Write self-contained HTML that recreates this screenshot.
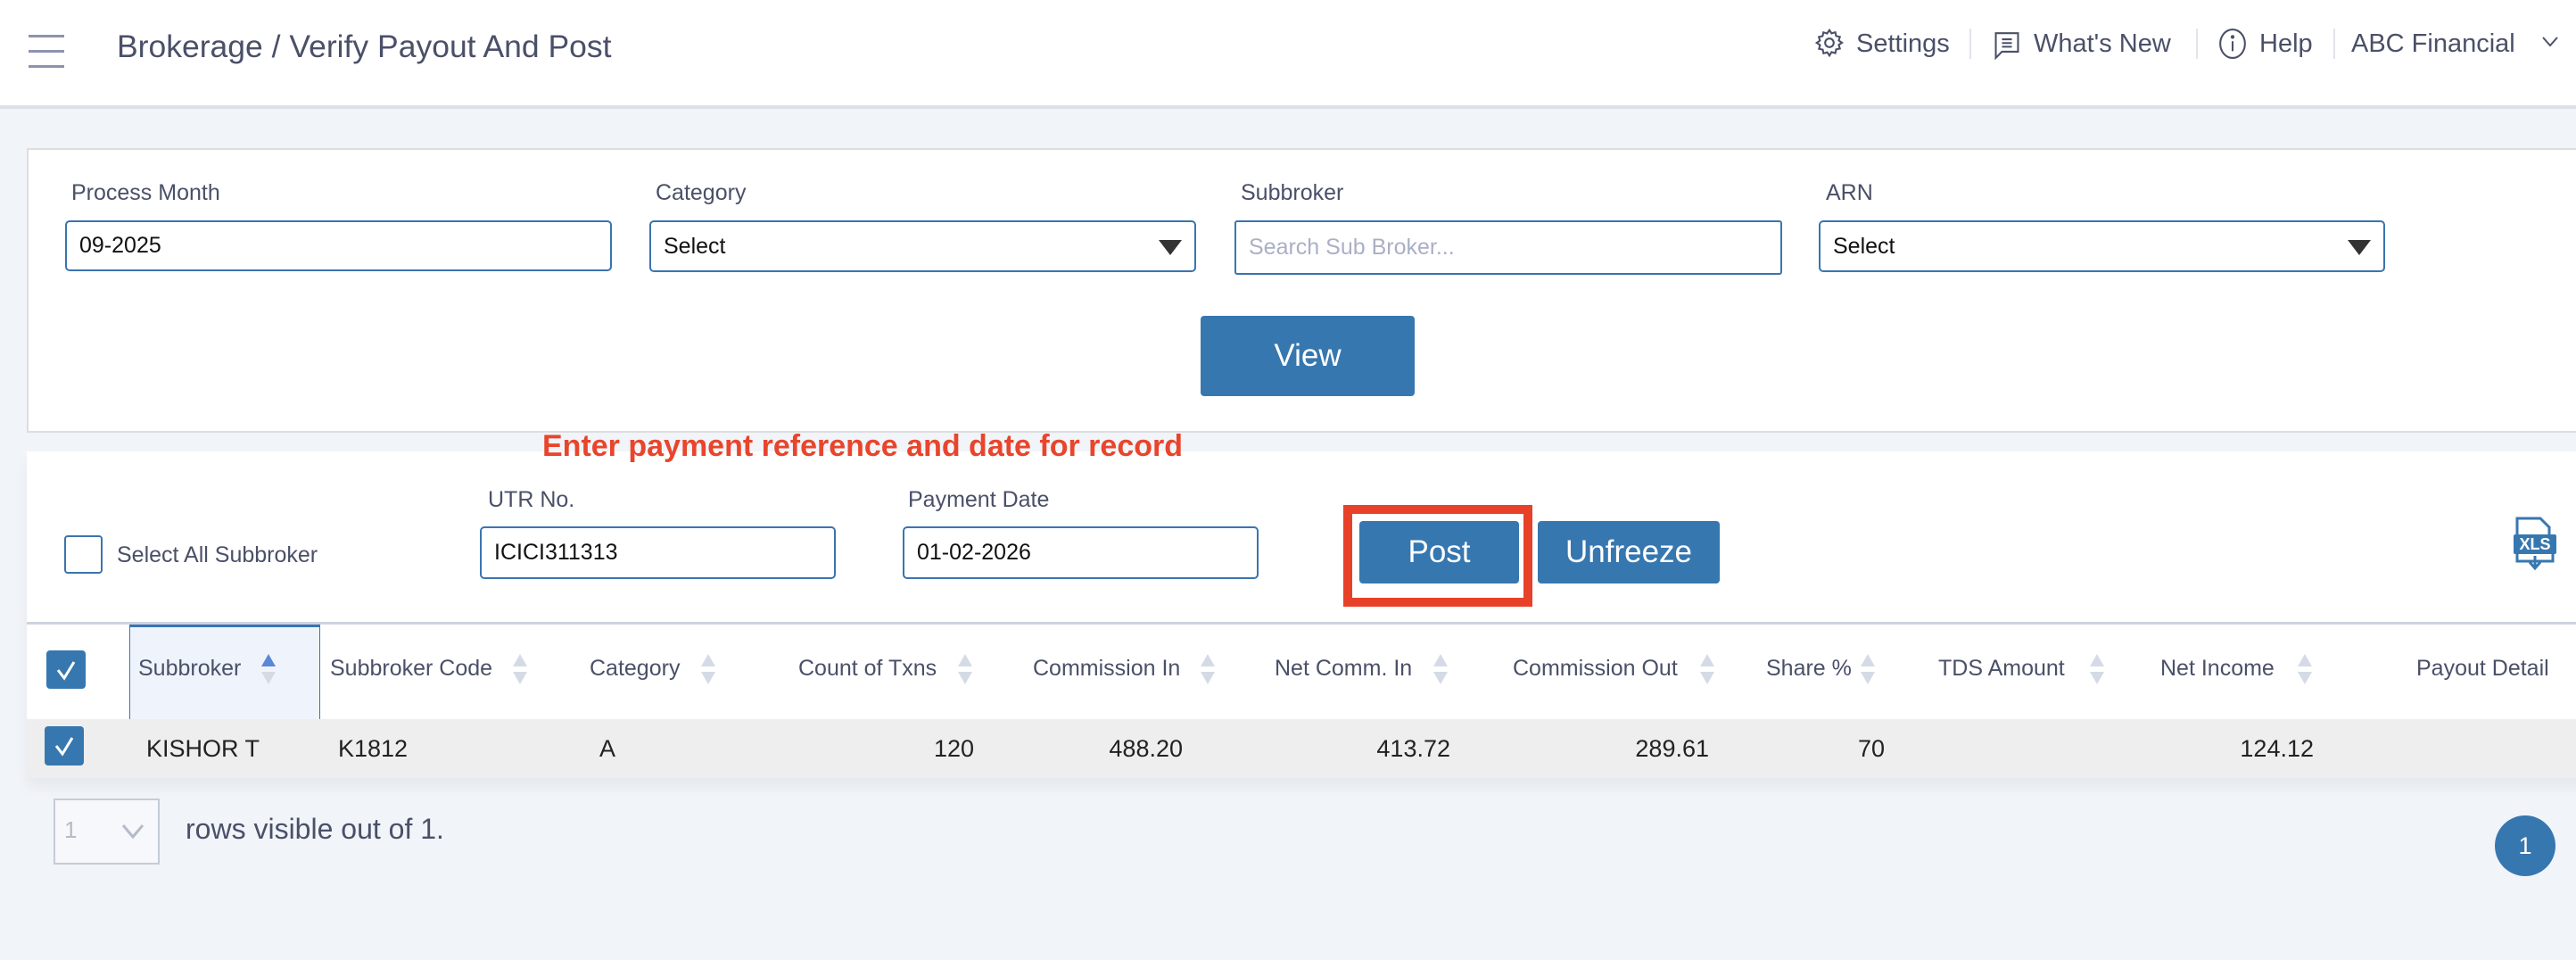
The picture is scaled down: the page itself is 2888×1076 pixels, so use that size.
<!DOCTYPE html>
<html><head><meta charset="utf-8"><style>
*{box-sizing:border-box;margin:0;padding:0}
body{width:2888px;height:1076px;background:#f1f4f8;font-family:"Liberation Sans",sans-serif;position:relative;overflow:hidden;color:#4a5068}
.a{position:absolute;white-space:nowrap}
.hdr{left:0;top:0;width:2888px;height:122px;background:#fff;border-bottom:4px solid #dde0e8}
.ham{left:32px;width:40px;height:3px;background:#8c93ad}
.nav{font-size:29px;color:#4a5068;top:33px}
.sep{top:32px;width:2px;height:34px;background:#e2e4ea}
.lbl{font-size:25px;color:#4a5068}
.inp{border:2px solid #3a74b0;border-radius:5px;background:#fff;font-size:25px;color:#111;padding-left:14px;display:flex;align-items:center}
.tri{position:absolute;right:14px;top:20px;width:0;height:0;border-left:13px solid transparent;border-right:13px solid transparent;border-top:17px solid #333}
.btn{background:#3777b0;color:#fff;border-radius:4px;display:flex;align-items:center;justify-content:center;font-size:35px}
.th{font-size:25px;color:#4a5068;top:735px}
.srt{top:733px;width:20px;height:34px}
.td{font-size:27px;color:#222;top:824px}
.cb{background:#3777b0;border-radius:4px}
</style></head><body>
<div class="a hdr"></div>
<div class="a ham" style="top:39px"></div>
<div class="a ham" style="top:56px"></div>
<div class="a ham" style="top:73px"></div>
<div class="a" style="left:131px;top:32px;font-size:35.5px;color:#4a5068">Brokerage / Verify Payout And Post</div>
<svg class="a" style="left:2033px;top:30px" width="36" height="36" viewBox="0 0 24 24" fill="none" stroke="#4a5068" stroke-width="1.4"><circle cx="12" cy="12" r="3.2"/><path d="M12 2.5l1.6 2.4 2.8-.8.6 2.8 2.8.6-.8 2.8 2.4 1.6-2.4 1.6.8 2.8-2.8.6-.6 2.8-2.8-.8L12 21.5l-1.6-2.4-2.8.8-.6-2.8-2.8-.6.8-2.8L2.5 12l2.4-1.6-.8-2.8 2.8-.6.6-2.8 2.8.8z"/></svg>
<div class="a nav" style="left:2081px">Settings</div>
<div class="a sep" style="left:2208px"></div>
<svg class="a" style="left:2233px;top:33px" width="34" height="36" viewBox="0 0 24 26" fill="none" stroke="#4a5068" stroke-width="1.5"><path d="M3 3h18v15H8l-5 5z"/><path d="M8 8h8M8 11h8M8 14h8"/></svg>
<div class="a nav" style="left:2280px">What's New</div>
<div class="a sep" style="left:2462px"></div>
<svg class="a" style="left:2486px;top:31px" width="34" height="36" viewBox="0 0 24 26" fill="none" stroke="#4a5068" stroke-width="1.5"><ellipse cx="12" cy="13" rx="10" ry="11.5"/><path d="M12 11v8"/><circle cx="12" cy="7.5" r=".8" fill="#4a5068"/></svg>
<div class="a nav" style="left:2533px">Help</div>
<div class="a sep" style="left:2616px"></div>
<div class="a nav" style="left:2636px">ABC Financial</div>
<svg class="a" style="left:2849px;top:40px" width="20" height="14" viewBox="0 0 20 14" fill="none" stroke="#4a5068" stroke-width="2"><path d="M2 2l8 9 8-9"/></svg>

<div class="a" style="left:30px;top:166px;width:2880px;height:319px;background:#fff;border:2px solid #ddd"></div>
<div class="a lbl" style="left:80px;top:202px">Process Month</div>
<div class="a lbl" style="left:735px;top:202px">Category</div>
<div class="a lbl" style="left:1391px;top:202px">Subbroker</div>
<div class="a lbl" style="left:2047px;top:202px">ARN</div>
<div class="a inp" style="left:73px;top:247px;width:613px;height:57px">09-2025</div>
<div class="a inp" style="left:728px;top:247px;width:613px;height:58px">Select<div class="tri"></div></div>
<div class="a inp" style="left:1384px;top:247px;width:614px;height:61px;color:#a9b0c6;border-radius:3px">Search Sub Broker...</div>
<div class="a inp" style="left:2039px;top:247px;width:635px;height:58px">Select<div class="tri"></div></div>
<div class="a btn" style="left:1346px;top:354px;width:240px;height:90px">View</div>

<div class="a" style="left:30px;top:506px;width:2880px;height:366px;background:#fff;box-shadow:0 10px 14px rgba(0,0,0,.05)"></div>
<div class="a" style="left:608px;top:481px;font-size:34px;font-weight:bold;color:#e8452c">Enter payment reference and date for record</div>
<div class="a lbl" style="left:547px;top:546px">UTR No.</div>
<div class="a lbl" style="left:1018px;top:546px">Payment Date</div>
<div class="a" style="left:72px;top:600px;width:43px;height:43px;border:2px solid #3a74b0;border-radius:4px"></div>
<div class="a lbl" style="left:131px;top:608px">Select All Subbroker</div>
<div class="a inp" style="left:538px;top:590px;width:399px;height:59px">ICICI311313</div>
<div class="a inp" style="left:1012px;top:590px;width:399px;height:59px">01-02-2026</div>
<div class="a" style="left:1506px;top:566px;width:212px;height:114px;border:10px solid #e8412a"></div>
<div class="a btn" style="left:1524px;top:584px;width:179px;height:70px">Post</div>
<div class="a btn" style="left:1724px;top:584px;width:204px;height:70px">Unfreeze</div>
<svg class="a" style="left:2816px;top:579px" width="52" height="62" viewBox="0 0 52 62"><path d="M6 2h26l10 10v12H6z" fill="#fff" stroke="#3777b0" stroke-width="3"/><rect x="2" y="20" width="48" height="22" rx="2" fill="#3777b0"/><text x="26" y="37" font-size="18" font-weight="bold" fill="#fff" text-anchor="middle" font-family="Liberation Sans">XLS</text><path d="M6 42v8h40v-8" fill="none" stroke="#3777b0" stroke-width="3"/><path d="M26 44v12M20 51l6 7 6-7" fill="none" stroke="#3777b0" stroke-width="3"/></svg>

<div class="a" style="left:30px;top:697px;width:2860px;height:3px;background:#cdd3df"></div>
<div class="a" style="left:145px;top:700px;width:214px;height:106px;background:#eff4fc;border:1px solid #3a74b0;border-top:3px solid #3a74b0;border-bottom:none"></div>
<div class="a cb" style="left:52px;top:729px;width:44px;height:43px"></div>
<svg class="a" style="left:52px;top:729px" width="44" height="43"><path d="M13 22l7 9 11-18" fill="none" stroke="#fff" stroke-width="3"/></svg>
<div class="a th" style="left:155px">Subbroker</div>
<div class="a th" style="left:370px">Subbroker Code</div>
<div class="a th" style="left:661px">Category</div>
<div class="a th" style="left:895px">Count of Txns</div>
<div class="a th" style="left:1158px">Commission In</div>
<div class="a th" style="left:1429px">Net Comm. In</div>
<div class="a th" style="left:1696px">Commission Out</div>
<div class="a th" style="left:1980px">Share %</div>
<div class="a th" style="left:2173px">TDS Amount</div>
<div class="a th" style="left:2422px">Net Income</div>
<div class="a th" style="left:2709px">Payout Detail</div>
<svg width="0" height="0" style="position:absolute"><defs><g id="s"><path d="M10 0l8 14H2z" fill="#d5dbe5"/><path d="M10 34l8-14H2z" fill="#d5dbe5"/></g></defs></svg>
<svg class="a srt" style="left:291px"><path d="M10 0l8 14H2z" fill="#5a87d8"/><path d="M10 34l8-14H2z" fill="#d5dbe5"/></svg>
<svg class="a srt" style="left:573px"><use href="#s"/></svg>
<svg class="a srt" style="left:784px"><use href="#s"/></svg>
<svg class="a srt" style="left:1072px"><use href="#s"/></svg>
<svg class="a srt" style="left:1344px"><use href="#s"/></svg>
<svg class="a srt" style="left:1605px"><use href="#s"/></svg>
<svg class="a srt" style="left:1904px"><use href="#s"/></svg>
<svg class="a srt" style="left:2084px"><use href="#s"/></svg>
<svg class="a srt" style="left:2341px"><use href="#s"/></svg>
<svg class="a srt" style="left:2574px"><use href="#s"/></svg>

<div class="a" style="left:30px;top:806px;width:2860px;height:66px;background:#eeeeee"></div>
<div class="a cb" style="left:50px;top:814px;width:44px;height:44px"></div>
<svg class="a" style="left:50px;top:814px" width="44" height="44"><path d="M13 22l7 9 11-18" fill="none" stroke="#fff" stroke-width="3"/></svg>
<div class="a td" style="left:164px">KISHOR T</div>
<div class="a td" style="left:379px">K1812</div>
<div class="a td" style="left:672px">A</div>
<div class="a td" style="right:1796px">120</div>
<div class="a td" style="right:1562px">488.20</div>
<div class="a td" style="right:1262px">413.72</div>
<div class="a td" style="right:972px">289.61</div>
<div class="a td" style="right:775px">70</div>
<div class="a td" style="right:294px">124.12</div>

<div class="a" style="left:60px;top:895px;width:119px;height:74px;border:2px solid #c5cbd8;background:#f7f8fb"></div>
<div class="a" style="left:72px;top:915px;font-size:26px;color:#b5bbc8">1</div>
<svg class="a" style="left:136px;top:923px" width="26" height="18"><path d="M2 2l11 13 11-13" fill="none" stroke="#b5bbc8" stroke-width="3"/></svg>
<div class="a" style="left:208px;top:911px;font-size:32px;color:#4a5068">rows visible out of 1.</div>
<div class="a" style="left:2797px;top:914px;width:68px;height:68px;border-radius:50%;background:#3777b0;color:#fff;font-size:27px;display:flex;align-items:center;justify-content:center">1</div>
</body></html>
